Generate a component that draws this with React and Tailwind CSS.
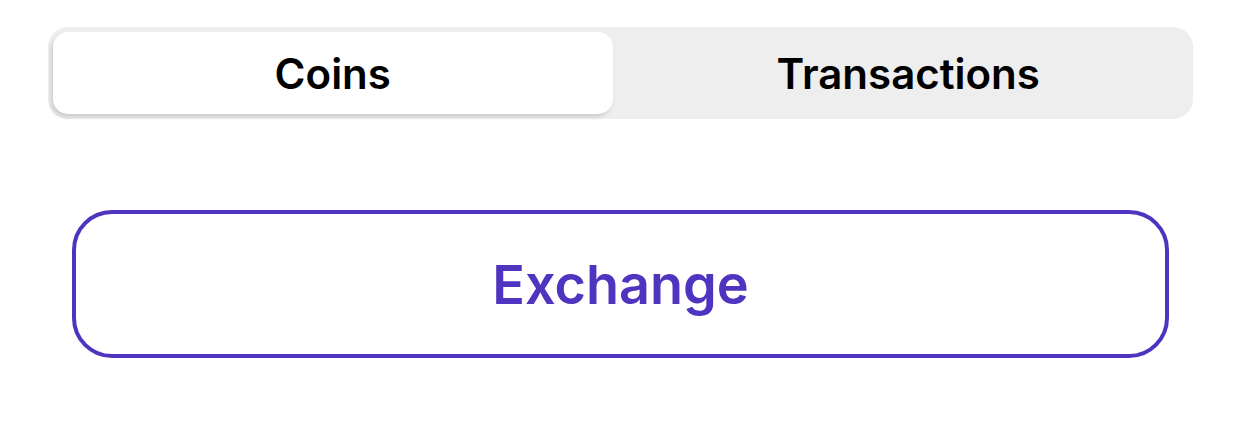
import { useState } from "react";

export default function App() {
  const [tab, setTab] = useState("coins");
  const tabs = [
    { id: "coins", label: "Coins" },
    { id: "transactions", label: "Transactions" },
  ];

  return (
    <div className="w-[1241px] h-[437px] bg-white px-[48px] pt-[27px] font-['Inter',sans-serif]">
      <div className="flex gap-[16px] h-[92px] rounded-[20px] bg-[#eeeeee] p-[5px]">
        {tabs.map((t) => (
          <button
            key={t.id}
            onClick={() => setTab(t.id)}
            className={`flex-1 flex items-center justify-center rounded-[15px] text-[42px] font-semibold text-black ${
              tab === t.id ? "bg-white shadow-[-2px_3px_4px_rgba(0,0,0,0.14)]" : ""
            }`}
          >
            {t.label}
          </button>
        ))}
      </div>

      <div className="px-[24px] mt-[91px]">
        <button className="w-full h-[148px] rounded-[40px] border-[4px] border-[#4e34bf] bg-white flex items-center justify-center text-[54px] font-semibold text-[#4e34bf]">
          Exchange
        </button>
      </div>
    </div>
  );
}
